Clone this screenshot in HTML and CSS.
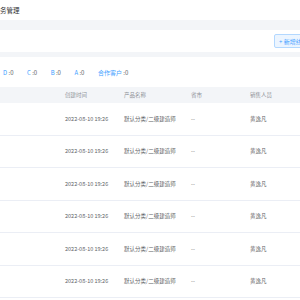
FILE: index.html
```html
<!DOCTYPE html>
<html>
<head>
    <meta charset="UTF-8">
    <title>业务管理</title>
    <link rel="stylesheet" href="styles.css">
</head>
<body>

<div class="page">
    <div class="title">务管理</div>
    <div class="band"></div>

    <div class="toolbar">
        <button class="add-btn">+ 新增线索</button>
    </div>
    <div class="band thin"></div>

    <div class="filters">
        <span class="tag"><b>D</b> :0</span>
        <span class="tag"><b>C</b> :0</span>
        <span class="tag"><b>B</b> :0</span>
        <span class="tag"><b>A</b> :0</span>
        <span class="tag"><b>合作客户</b> :0</span>
        <button class="filter-btn">筛选</button>
    </div>

    <div class="grid head">
        <div></div>
        <div>创建时间</div>
        <div>产品名称</div>
        <div>省市</div>
        <div>销售人员</div>
    </div>

    <div class="grid row">
        <div></div><div>2022-08-10 19:26</div><div>默认分类/二级建造师</div><div>--</div><div>黄逸凡</div>
    </div>
    <div class="grid row">
        <div></div><div>2022-08-10 19:26</div><div>默认分类/二级建造师</div><div>--</div><div>黄逸凡</div>
    </div>
    <div class="grid row">
        <div></div><div>2022-08-10 19:26</div><div>默认分类/二级建造师</div><div>--</div><div>黄逸凡</div>
    </div>
    <div class="grid row">
        <div></div><div>2022-08-10 19:26</div><div>默认分类/二级建造师</div><div>--</div><div>黄逸凡</div>
    </div>
    <div class="grid row">
        <div></div><div>2022-08-10 19:26</div><div>默认分类/二级建造师</div><div>--</div><div>黄逸凡</div>
    </div>
    <div class="grid row">
        <div></div><div>2022-08-10 19:26</div><div>默认分类/二级建造师</div><div>--</div><div>黄逸凡</div>
    </div>
</div>

</body>
</html>
```

FILE: styles.css
```css
body {
    margin: 0;
    background: #fff;
    font-family: "Noto Sans CJK SC", "Noto Sans", sans-serif;
    color: #606266;
    overflow: hidden;
}

.page {
    width: 300px;
    height: 300px;
    overflow: hidden;
}

.title {
    height: 20px;
    line-height: 20px;
    font-size: 6.5px;
    color: #303133;
}

.band {
    height: 10px;
    background: #f3f5f8;
}
.band.thin {
    height: 5px;
}

.toolbar {
    height: 22px;
    display: flex;
    align-items: center;
    padding-left: 274px;
}

.add-btn {
    flex-shrink: 0;
    white-space: nowrap;
    height: 14px;
    padding: 0 4px;
    font-family: inherit;
    font-size: 6px;
    color: #409eff;
    background: #ecf5ff;
    border: 1px solid #b3d8ff;
    border-radius: 2px;
}

.filters {
    height: 30px;
    display: flex;
    align-items: center;
    padding-left: 3px;
    font-size: 6px;
}

.tag {
    margin-right: 13.5px;
    white-space: nowrap;
    color: #606266;
}
.tag b {
    font-weight: normal;
    color: #409eff;
}

.filter-btn {
    flex-shrink: 0;
    margin-left: auto;
    margin-right: -20px;
    white-space: nowrap;
    height: 16px;
    padding: 0 4px;
    font-family: inherit;
    font-size: 6px;
    color: #606266;
    background: #f4f4f5;
    border: none;
    border-radius: 2px;
}

.grid {
    display: grid;
    grid-template-columns: 65px 59px 67px 59px 1fr;
    align-items: center;
    font-size: 5.5px;
    white-space: nowrap;
}

.head {
    height: 16px;
    background: #f3f5f8;
    color: #909399;
}

.row {
    height: 32.5px;
    border-bottom: 1px solid #ebeef5;
    box-sizing: border-box;
}
```
